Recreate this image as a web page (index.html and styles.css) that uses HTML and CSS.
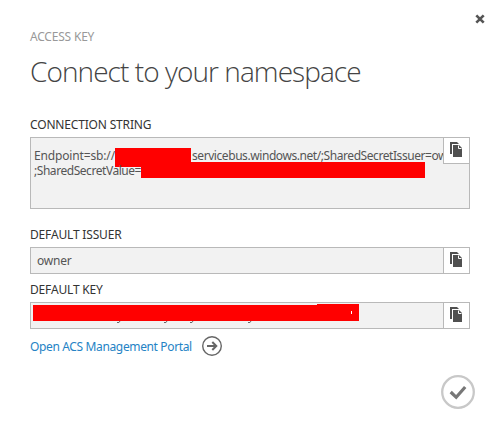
FILE: index.html
```html
<!DOCTYPE html>
<html lang="en">
<head>
<meta charset="utf-8">
<title>Connect to your namespace</title>
<link rel="stylesheet" href="styles.css">
</head>
<body>
<svg class="defs" width="0" height="0" aria-hidden="true">
  <symbol id="copy" viewBox="0 0 12 15">
    <path d="M0 0H7L9 2H2V12H0Z" fill="#505050"/>
    <path d="M3 3H9L12 6V15H3Z" fill="#505050"/>
    <path d="M8.5 3.5V6.5H11.5" fill="none" stroke="#fff"/>
  </symbol>
</svg>
<main class="dialog">
  <button class="close" aria-label="Close"><svg width="10" height="10" viewBox="0 0 10 10"><path d="M1.3 1.3L8.7 8.7M8.7 1.3L1.3 8.7" stroke="#555" stroke-width="2.6"/></svg></button>
  <p class="eyebrow"><span>ACCESS KEY</span></p>
  <h1><span>Connect to your namespace</span></h1>
  <section class="group connection">
    <h2>CONNECTION STRING</h2>
    <div class="field area">
      <div class="value">
        <div class="line"><span class="s1">Endpoint=sb://</span><i class="redact host"></i><span class="s2">servicebus.windows.net/;SharedSecretIssuer=ow</span></div>
        <div class="line"><span class="s3">;SharedSecretValue=</span><i class="redact secret"></i></div>
      </div>
      <button class="copy" aria-label="Copy"><svg width="12" height="15"><use href="#copy"/></svg></button>
    </div>
  </section>
  <section class="group issuer">
    <h2>DEFAULT ISSUER</h2>
    <div class="field">
      <div class="value owner"><span>owner</span></div>
      <button class="copy" aria-label="Copy"><svg width="12" height="15"><use href="#copy"/></svg></button>
    </div>
  </section>
  <section class="group key">
    <h2>DEFAULT KEY</h2>
    <div class="field">
      <div class="value"><svg class="mask" width="330" height="21" viewBox="0 0 330 21"><path d="M0 2H284V1H326V18H0Z" fill="red"/><path d="M318 8h1v3h-1z" fill="#fff"/><path d="M84 19.5h2l1-1.5M131 19.5h2l1-1.5M157 19.5h2l1-1.5M215 19.5h2l1-1.5" fill="none" stroke="#666"/></svg></div>
      <button class="copy" aria-label="Copy"><svg width="12" height="15"><use href="#copy"/></svg></button>
    </div>
  </section>
  <a class="portal"><span>Open ACS Management Portal</span><svg width="20" height="20" viewBox="0 0 20 20" fill="none" stroke="#666"><circle cx="10" cy="10" r="9.3" stroke-width="1.4"/><path d="M5 10H14M10.3 6L14.3 10L10.3 14" stroke-width="2"/></svg></a>
  <footer><button class="confirm" aria-label="Confirm"><svg width="34" height="34" viewBox="0 0 34 34" fill="none"><circle cx="17" cy="17" r="15.8" stroke="#c8c8c8" stroke-width="2.3"/><path d="M9.7 17L15.2 22.3L24.2 12" stroke="#777" stroke-width="3.2"/></svg></button></footer>
</main>
</body>
</html>
```
FILE: styles.css
```css
* { box-sizing: border-box; }
body { margin: 0; background: #fff; font-family: "Noto Sans", "Open Sans", sans-serif; color: #333; }
.defs { display: block; }
.dialog { position: relative; width: 500px; height: 433px; padding: 29px 30px 0; overflow: hidden; }
button { padding: 0; border: 0; background: none; }
svg { display: block; }
p, h1, h2 { margin: 0; font-weight: 400; white-space: nowrap; }
.close { position: absolute; left: 475px; top: 14px; }
.eyebrow { height: 16px; font-size: 12px; line-height: 16px; color: #999; letter-spacing: -0.2px; }
h1 { height: 40px; margin-top: 7px; font-family: "Open Sans", sans-serif; font-weight: 300; font-size: 28px; line-height: 38px; color: #444; letter-spacing: -0.93px; }
h2 { height: 16px; font-size: 12px; line-height: 16px; letter-spacing: -0.17px; }
.connection { margin-top: 25px; }
.issuer { margin-top: 18px; }
.key { margin-top: 8px; }
.field { display: flex; height: 27px; margin-top: 4px; border: 1px solid #b9b9b9; background: #f2f2f2; }
.area { height: 72px; }
.value { flex: 1; min-width: 0; overflow: hidden; font-size: 12px; color: #555; }
.area .value { padding: 10px 0 0 3px; }
.line { display: flex; height: 15px; line-height: 16px; white-space: nowrap; }
.redact { flex: none; background: red; }
.host { width: 76px; height: 19px; margin-right: 1px; }
.secret { width: 284px; height: 16px; margin-top: -1px; }
.copy { display: flex; flex: none; width: 26px; height: 25px; border-left: 1px solid #b9b9b9; background: #fff; padding: 4px 0 0 6px; }
.area .copy { height: 26px; border-bottom: 1px solid #b9b9b9; }
.owner { padding-left: 6px; line-height: 26px; letter-spacing: -0.2px; }
.mask { margin-left: 2px; }
.portal { display: flex; align-items: center; gap: 10px; height: 20px; margin-top: 7px; font-size: 12px; color: #2583c5; white-space: nowrap; letter-spacing: -0.36px; }
footer { display: flex; justify-content: flex-end; margin: 19px -5px 0 0; }
.s1 { flex: none; width: 81px; letter-spacing: -0.15px; }
.s2 { flex: none; letter-spacing: -0.43px; }
.s3 { flex: none; width: 107px; letter-spacing: -0.45px; }
.portal span { width: 162px; }
```
